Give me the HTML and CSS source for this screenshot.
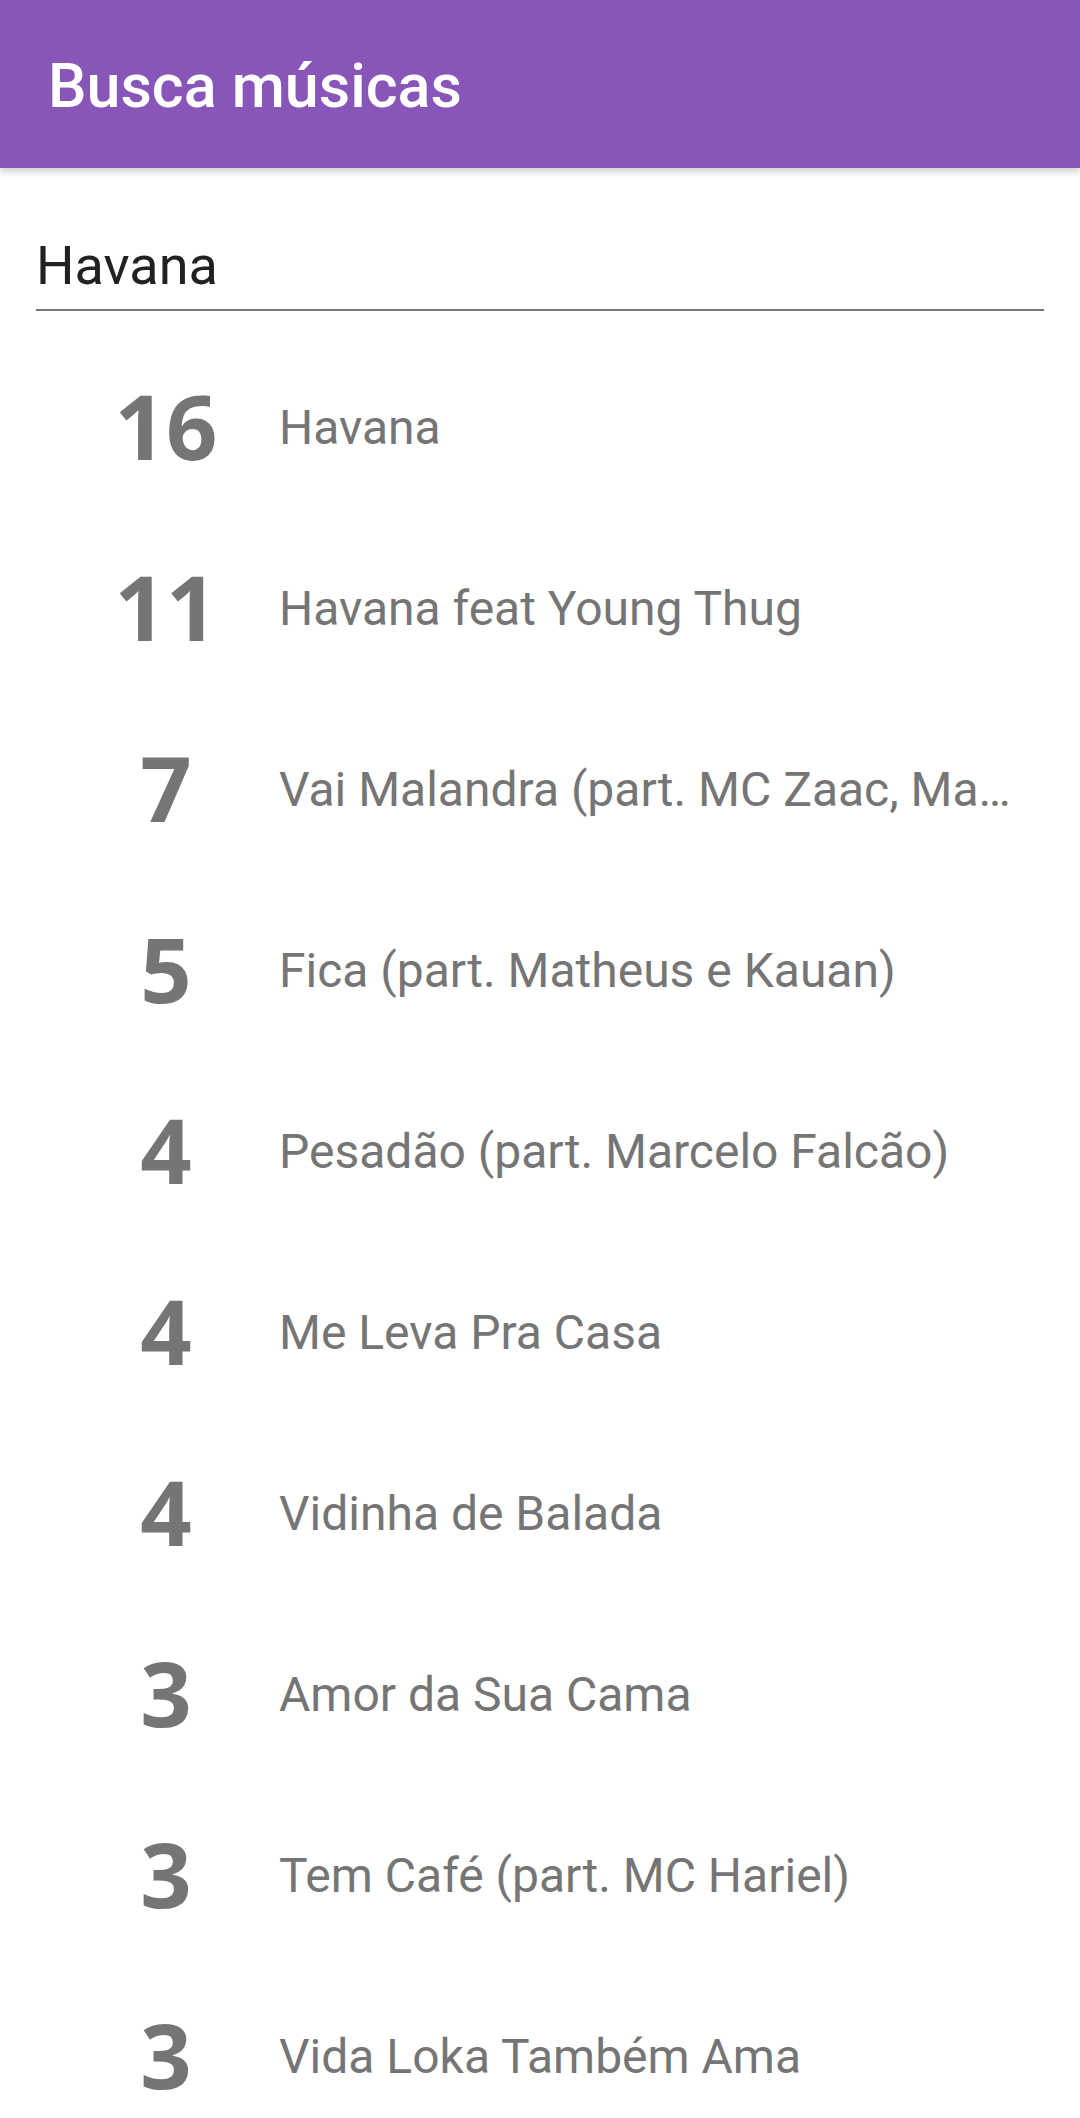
FILE: index.html
```html
<!DOCTYPE html>
<html lang="pt-BR">
<head>
<meta charset="utf-8">
<title>Busca músicas</title>
<link rel="stylesheet" href="styles.css">
</head>
<body>
<div class="screen">
  <header class="appbar">
    <h1 class="appbar-title">Busca músicas</h1>
  </header>
  <main class="content">
    <div class="search">
      <div class="search-text">Havana</div>
    </div>
    <ul class="results">
      <li class="row"><span class="count">16</span><span class="song">Havana</span></li>
      <li class="row"><span class="count">11</span><span class="song">Havana feat Young Thug</span></li>
      <li class="row"><span class="count">7</span><span class="song">Vai Malandra (part. MC Zaac, Maejor, Tropkillaz e DJ Yuri Martins)</span></li>
      <li class="row"><span class="count">5</span><span class="song">Fica (part. Matheus e Kauan)</span></li>
      <li class="row"><span class="count">4</span><span class="song">Pesadão (part. Marcelo Falcão)</span></li>
      <li class="row"><span class="count">4</span><span class="song">Me Leva Pra Casa</span></li>
      <li class="row"><span class="count">4</span><span class="song">Vidinha de Balada</span></li>
      <li class="row"><span class="count">3</span><span class="song">Amor da Sua Cama</span></li>
      <li class="row"><span class="count">3</span><span class="song">Tem Café (part. MC Hariel)</span></li>
      <li class="row"><span class="count">3</span><span class="song">Vida Loka Também Ama</span></li>
    </ul>
  </main>
</div>
</body>
</html>
```
FILE: styles.css
```css
* { box-sizing: border-box; }
html, body {
  margin: 0;
  padding: 0;
  background: #ffffff;
  height: 2118px;
  overflow: hidden;
}
.screen {
  width: 1080px;
  font-family: Roboto, "Noto Sans", sans-serif;
}
.appbar {
  height: 168px;
  background: #8856b9;
  display: flex;
  align-items: center;
  padding-left: 48px;
  padding-top: 5px;
  box-shadow: 0 3px 8px rgba(0, 0, 0, 0.22);
  position: relative;
  z-index: 1;
}
.appbar-title {
  margin: 0;
  font-size: 61px;
  font-weight: 500;
  color: #ffffff;
  line-height: 1;
}
.content {
  padding: 66px 36px 0 36px;
}
.search {
  border-bottom: 2px solid #777777;
  padding: 0 0 12px 0;
}
.search-text {
  font-size: 54px;
  color: #212121;
  line-height: 63px;
}
.results {
  list-style: none;
  margin: 26px 0 0 0;
  padding: 0;
}
.row {
  height: 181px;
  display: grid;
  grid-template-columns: 200px 1fr;
  column-gap: 13px;
  align-items: center;
  padding-left: 30px;
  padding-right: 14px;
}
.count {
  font-family: "Open Sans", "DejaVu Sans", sans-serif;
  font-weight: 700;
  font-size: 90px;
  line-height: 1;
  color: #757575;
  text-align: center;
  position: relative;
  top: -3px;
}
.song {
  font-size: 48px;
  color: #757575;
  white-space: nowrap;
  overflow: hidden;
  text-overflow: ellipsis;
  min-width: 0;
}
```
